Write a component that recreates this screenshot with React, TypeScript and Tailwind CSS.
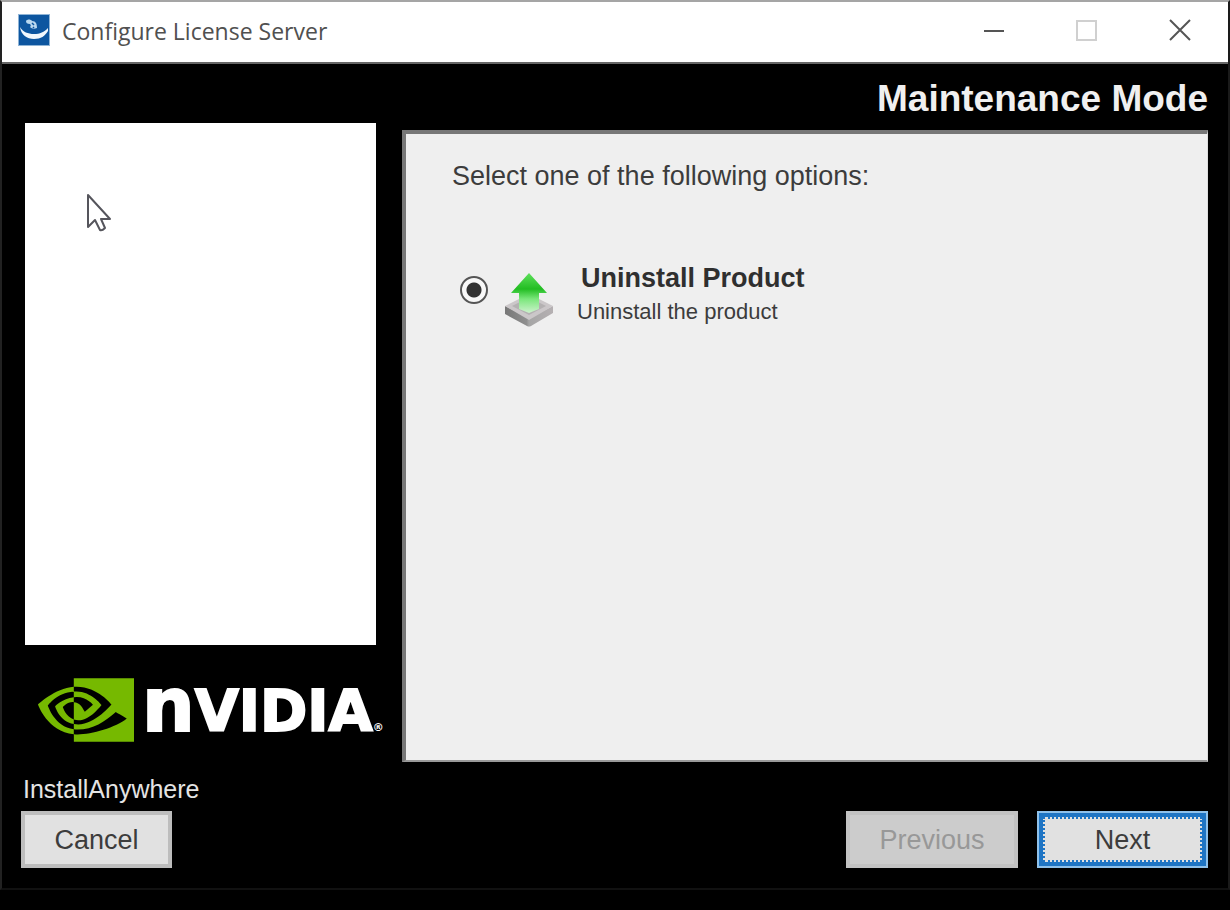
import { SiNvidia } from 'react-icons/si';

const AppIcon = () => (
  <svg viewBox="0 0 32 32" className="h-8 w-8" aria-hidden="true">
    <rect width="32" height="32" fill="#8fb4d6" />
    <rect x="1" y="1" width="30" height="30" fill="#0d56a0" />
    <path
      d="M2 13c1 8 7 12 14 12s11-3 14-8v-3c-4 4-8 6-14 6S5 18 2 13z"
      fill="#f2f8fd"
    />
    <path
      d="M8 7c1-2 5-2 6 0 4 0 5 3 5 7-3 1-5 1-7-1 1-1 1-2 0-3-3 0-4-1-4-3z"
      fill="#b9d8f0"
    />
    <path d="M14 9l2 2M15 13l1 1" stroke="#0d56a0" strokeWidth="1.5" />
  </svg>
);

const CursorIcon = () => (
  <svg
    viewBox="0 0 26 40"
    className="absolute left-[61px] top-[70px] h-10 w-[26px]"
    aria-hidden="true"
  >
    <path
      d="M2 2v32l7-7 5 10q2 1 5-2l-4-9h9z"
      fill="#fff"
      stroke="#55555c"
      strokeWidth="2"
      strokeLinejoin="round"
    />
  </svg>
);

const UninstallIcon = () => (
  <svg viewBox="0 0 52 58" className="mt-2.5 h-[58px] w-[52px]" aria-hidden="true">
    <defs>
      <linearGradient id="arrow" x1="0" y1="0" x2="0" y2="1">
        <stop offset="0" stopColor="#5fe05c" />
        <stop offset="0.4" stopColor="#22bd22" />
        <stop offset="0.65" stopColor="#7be77c" />
        <stop offset="1" stopColor="#cdf2cd" />
      </linearGradient>
      <linearGradient id="tray" x1="0" y1="0" x2="1" y2="0">
        <stop offset="0" stopColor="#777" />
        <stop offset="0.45" stopColor="#8f8f8f" />
        <stop offset="0.5" stopColor="#a5a5a5" />
        <stop offset="1" stopColor="#b5b0b2" />
      </linearGradient>
    </defs>
    <path d="M1 34v8l22 12q2 1 4 0l22-13v-7L25 46z" fill="url(#tray)" />
    <path d="M1 34l14-7h20l14 7-24 14z" fill="#cbc7c9" />
    <path d="M8 34l10-5h14l10 5-17 9z" fill="#b4b1b2" />
    <path d="M25 1l18 20H35v16l-10 4-10-4V21H7z" fill="url(#arrow)" />
  </svg>
);

const TitleBar = () => (
  <header className="flex h-[62px] items-center justify-between border-b-2 border-[#666] bg-white pb-1 pl-4">
    <div className="flex items-center gap-3">
      <AppIcon />
      <span className="pt-0.5 font-['Open_Sans',sans-serif] text-[23px] text-[#505050]">
        Configure License Server
      </span>
    </div>
    <div className="flex gap-[45px] pr-6 text-[#555]">
      <button aria-label="Minimize" className="flex w-12 justify-center">
        <svg viewBox="0 0 24 24" className="h-6 w-6">
          <path d="M2 13h20" stroke="currentColor" strokeWidth="2" />
        </svg>
      </button>
      <button aria-label="Maximize" disabled className="flex w-12 justify-center">
        <svg viewBox="0 0 24 24" className="h-6 w-6">
          <rect x="2" y="3" width="19" height="19" fill="none" stroke="#d0d0d0" strokeWidth="2" />
        </svg>
      </button>
      <button aria-label="Close" className="flex w-12 justify-center">
        <svg viewBox="0 0 24 24" className="h-6 w-6">
          <path d="M2 2l20 20M22 2L2 22" stroke="currentColor" strokeWidth="2" />
        </svg>
      </button>
    </div>
  </header>
);

const NvidiaLogo = () => (
  <div className="ml-[13px] flex h-16 items-center gap-2 whitespace-nowrap">
    <SiNvidia className="h-24 w-24 shrink-0 text-[#76b900]" aria-hidden="true" />
    <div className="flex items-baseline pt-3 font-['DejaVu_Sans',sans-serif] text-[57px] leading-[64px] font-bold text-white">
      <span className="text-[74px] leading-[64px] [-webkit-text-stroke:2px_white]">n</span>
      <span className="[-webkit-text-stroke:2px_white]">VIDIA</span>
      <span className="text-[11px] leading-[64px]">®</span>
    </div>
  </div>
);

const App = () => (
  <div className="flex min-h-screen flex-col bg-black pb-5 font-['Liberation_Sans',Arial,sans-serif] text-[27px] leading-8 text-[#3c3c3c]">
    <div className="flex flex-1 flex-col border-2 border-t-[#a5a5a5] border-r-[#1a1a1a] border-b-[#111] border-l-[#222]">
      <TitleBar />
      <h1 className="flex h-[59px] items-center justify-end pt-2.5 pr-5 text-[37px] font-bold text-[#f0f0f0]">
        Maintenance Mode
      </h1>
      <main className="flex flex-1 gap-[26px] pr-5 pl-[23px]">
        <aside className="flex w-[351px] shrink-0 flex-col gap-[33px] pb-5">
          <div className="relative flex-1 bg-white">
            <CursorIcon />
          </div>
          <NvidiaLogo />
        </aside>
        <section className="mt-[7px] flex-1 border-t-4 border-r border-b-2 border-l-4 border-t-[#777] border-r-[#ddd] border-b-[#999] border-l-[#777] bg-[#efefef] pt-[26px]">
          <p className="pl-[46px]">Select one of the following options:</p>
          <label className="mt-[70px] flex pl-[54px]">
            <input
              type="radio"
              name="option"
              defaultChecked
              className="mt-3.5 mr-4 h-7 w-7 appearance-none rounded-full border-2 border-[#555] bg-[#f8f8f8] checked:bg-[radial-gradient(circle,#333_7px,#f8f8f8_8px)]"
            />
            <UninstallIcon />
            <span className="ml-[21px] flex flex-col gap-1">
              <span className="pl-1 font-bold text-[#2f2f2f]">Uninstall Product</span>
              <span className="text-[22px] leading-7">Uninstall the product</span>
            </span>
          </label>
        </section>
      </main>
      <footer className="pr-5 pb-5 pl-[19px]">
        <div className="flex h-[49px] items-center pt-1 pl-0.5 text-[25px] text-[#e4e4e4]">
          InstallAnywhere
        </div>
        <div className="flex gap-[19px]">
          <button className="mr-auto h-[57px] w-[151px] border-4 border-[#bdbdbd] bg-[#e1e1e1]">
            Cancel
          </button>
          <button
            disabled
            className="h-[57px] w-[172px] border-4 border-[#c2c2c2] bg-[#cccccc] text-[#989898]"
          >
            Previous
          </button>
          <button className="h-[57px] w-[171px] border-2 border-[#8fc1ea] bg-[#1f75c4] p-1">
            <span className="flex h-full items-center justify-center border-2 border-dotted border-[#1f75c4] bg-[#e1e1e1]">
              Next
            </span>
          </button>
        </div>
      </footer>
    </div>
  </div>
);

export default App;
